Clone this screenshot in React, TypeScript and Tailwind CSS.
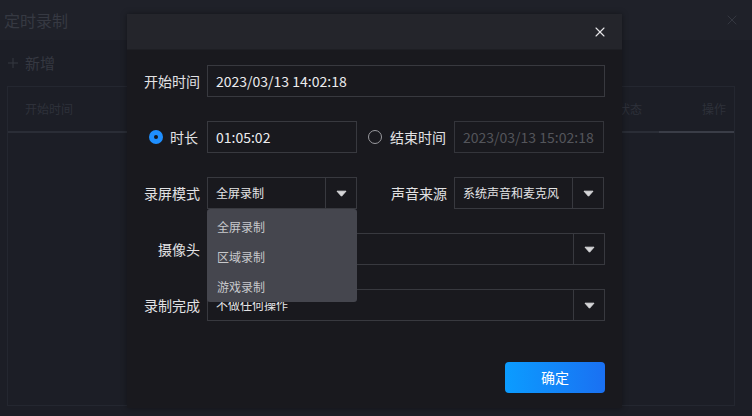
import { X, Plus } from "lucide-react";

const FONT = { fontFamily: '"Noto Sans CJK SC", "Noto Sans", sans-serif' };

function Caret() {
  return (
    <svg width="11" height="7" viewBox="0 0 11 7" className="text-[#d6d6d8]">
      <path d="M1 1.2 L10 1.2 L5.5 6.2 Z" fill="currentColor" stroke="currentColor" strokeWidth="1" strokeLinejoin="round" />
    </svg>
  );
}

function Radio({ checked }: { checked: boolean }) {
  return checked ? (
    <span className="w-[14px] h-[14px] rounded-full bg-[#1f8fff] flex items-center justify-center shrink-0">
      <span className="w-[4px] h-[4px] rounded-full bg-[#15161a]" />
    </span>
  ) : (
    <span className="w-[14px] h-[14px] rounded-full border border-[#9a9a9e] shrink-0" />
  );
}

function Select({ value, className = "" }: { value: string; className?: string }) {
  return (
    <div className={`h-[32px] border border-[#38393f] flex ${className}`}>
      <div className="flex-1 flex items-center pl-[8px] text-[12px] text-[#e4e4e6]">{value}</div>
      <div className="w-[31px] border-l border-[#38393f] flex items-center justify-center">
        <Caret />
      </div>
    </div>
  );
}

export default function App() {
  return (
    <div className="relative w-[752px] h-[416px] overflow-hidden bg-[#1c1e26]" style={FONT}>
      {/* background page */}
      <div className="h-[40px] bg-[#1f2129] flex items-center justify-between pl-[4px] pr-[12px]">
        <span className="text-[16px] text-[#363942]">定时录制</span>
        <X className="w-[16px] h-[16px] text-[#343740]" strokeWidth={1.5} />
      </div>
      <div className="h-[46px] flex items-center pl-[5px] gap-[4px] text-[15px] text-[#353841]">
        <Plus className="w-[16px] h-[16px]" strokeWidth={1.5} />
        <span>新增</span>
      </div>
      <div className="ml-[7px] mr-[17px] h-[320px] border border-[#242730]">
        <div className="h-[46px] border-b-2 border-[#2a2d36] flex items-center justify-between pl-[17px] pr-[8px] text-[12px] text-[#2e313a] relative">
          <span>开始时间</span>
          <div className="flex gap-[60px]">
            <span>状态</span>
            <span>操作</span>
          </div>
          <span className="absolute -bottom-[2px] right-0 w-[75px] h-[2px] bg-[#3a3d47]" />
        </div>
      </div>

      {/* modal */}
      <div className="absolute left-[127px] top-[14px] w-[495px] h-[394px] bg-[#19191e] flex flex-col shadow-[0_0_6px_rgba(0,0,0,0.4)]">
        <div className="h-[36px] bg-[#24252b] flex items-center justify-end pr-[14px] border-b border-[#1e1f24]">
          <X className="w-[16px] h-[16px] text-[#e6e6e8]" strokeWidth={1.6} />
        </div>
        <div className="flex-1 pt-[15px] pl-[17px] pr-[17px] flex flex-col gap-[24px] text-[14px] text-[#e2e2e4]">
          <div className="flex items-center gap-[7px]">
            <span className="w-[56px] text-right">开始时间</span>
            <div className="flex-1 h-[32px] border border-[#38393f] flex items-center pl-[8px] text-[14px] text-[#ececee]">
              2023/03/13 14:02:18
            </div>
          </div>

          <div className="flex items-center">
            <div className="w-[56px] flex items-center justify-end gap-[7px] pr-[2px]">
              <Radio checked />
              <span>时长</span>
            </div>
            <div className="ml-[7px] w-[150px] h-[32px] border border-[#38393f] flex items-center pl-[8px] text-[14px] text-[#ececee]">
              01:05:02
            </div>
            <div className="ml-[11px] flex items-center gap-[8px]">
              <Radio checked={false} />
              <span>结束时间</span>
            </div>
            <div className="ml-[8px] w-[150px] h-[32px] border border-[#34353b] flex items-center pl-[8px] text-[14px] text-[#54555b]">
              2023/03/13 15:02:18
            </div>
          </div>

          <div className="flex items-center">
            <span className="w-[56px] text-right">录屏模式</span>
            <div className="ml-[7px] w-[150px] relative">
              <Select value="全屏录制" />
              <div className="absolute left-0 top-[32px] w-[150px] h-[93px] pt-[3px] bg-[#45464e] rounded-[3px] z-10 text-[12px] text-[#c8c9cc]">
                <div className="h-[30px] flex items-center pl-[10px]">全屏录制</div>
                <div className="h-[30px] flex items-center pl-[10px]">区域录制</div>
                <div className="h-[30px] flex items-center pl-[10px]">游戏录制</div>
              </div>
            </div>
            <span className="w-[90px] text-right">声音来源</span>
            <Select value="系统声音和麦克风" className="ml-[7px] w-[150px]" />
          </div>

          <div className="flex items-center gap-[7px]">
            <span className="w-[56px] text-right">摄像头</span>
            <Select value="" className="flex-1" />
          </div>

          <div className="flex items-center gap-[7px]">
            <span className="w-[56px] text-right">录制完成</span>
            <Select value="不做任何操作" className="flex-1" />
          </div>

          <div className="flex justify-end mt-[17px]">
            <button className="w-[100px] h-[31px] rounded-[4px] bg-gradient-to-r from-[#0b9cff] to-[#1a70f2] text-[14px] text-white">
              确定
            </button>
          </div>
        </div>
      </div>
    </div>
  );
}
